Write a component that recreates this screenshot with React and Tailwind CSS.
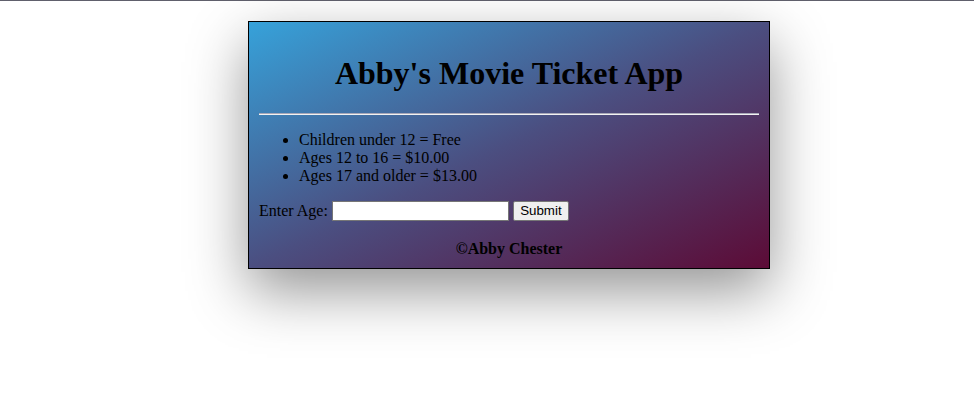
export default function App() {
  const prices = [
    "Children under 12 = Free",
    "Ages 12 to 16 = $10.00",
    "Ages 17 and older = $13.00",
  ];

  return (
    <div className="min-h-[402px] bg-white font-['Liberation_Serif',serif] text-black">
      {/* top edge line */}
      <div className="h-px bg-[#60606c]" />

      <div className="ml-[248px] mt-[20px] w-[522px] border border-black bg-[linear-gradient(to_bottom_right,#36a2da,#4b4e80_50%,#5c0b36)] px-[10px] pt-[10px] pb-[10px] shadow-[0_22px_55px_rgba(0,0,0,0.42)]">
        <h1 className="mt-[22px] mb-[21px] text-center text-[32px] font-bold leading-[38px]">
          Abby's Movie Ticket App
        </h1>

        <hr className="border-0 border-t border-b border-t-[#a8a8b8] border-b-[#f2f2f2]" />

        <ul className="my-[16px] list-disc pl-[40px] text-[16px] leading-[18px]">
          {prices.map((p) => (
            <li key={p}>{p}</li>
          ))}
        </ul>

        <form className="flex items-center text-[16px] leading-[20px]" onSubmit={(e) => e.preventDefault()}>
          <label htmlFor="age">Enter Age:</label>
          <input
            id="age"
            type="text"
            className="ml-[4px] h-[20px] w-[177px] border border-[#767676] bg-white px-[2px] font-['Liberation_Sans',sans-serif] text-[13px]"
          />
          <button
            type="submit"
            className="ml-[4px] h-[20px] w-[56px] rounded-[2px] border border-[#767676] bg-[#efefef] font-['Liberation_Sans',sans-serif] text-[13.33px] leading-[16px]"
          >
            Submit
          </button>
        </form>

        <p className="mt-[19px] text-center text-[16px] font-bold leading-[18px]">©Abby Chester</p>
      </div>
    </div>
  );
}
